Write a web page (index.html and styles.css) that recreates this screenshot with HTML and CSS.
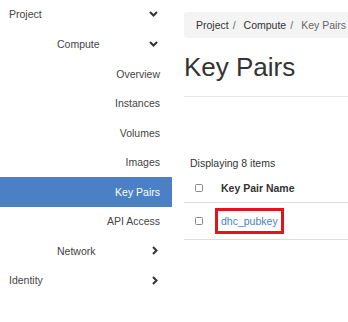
FILE: index.html
```html
<!DOCTYPE html>
<html lang="en">
<head>
    <meta charset="UTF-8">
    <meta name="viewport" content="width=device-width, initial-scale=1.0">
    <title>Key Pairs</title>
    <link rel="stylesheet" href="styles.css">
</head>
<body>
    <!-- Sidebar -->
    <nav class="sidebar">
        <div class="nav-row top first">
            <span>Project</span>
            <svg class="chev" width="9" height="6" viewBox="0 0 9 6"><path d="M1 1 L4.5 4.5 L8 1" /></svg>
        </div>
        <div class="nav-row group compute">
            <span>Compute</span>
            <svg class="chev" width="9" height="6" viewBox="0 0 9 6"><path d="M1 1 L4.5 4.5 L8 1" /></svg>
        </div>
        <a class="nav-row sub" href="#">Overview</a>
        <a class="nav-row sub" href="#">Instances</a>
        <a class="nav-row sub" href="#">Volumes</a>
        <a class="nav-row sub" href="#">Images</a>
        <a class="nav-row sub active" href="#">Key Pairs</a>
        <a class="nav-row sub" href="#">API Access</a>
        <div class="nav-row group">
            <span>Network</span>
            <svg class="chev" width="6" height="9" viewBox="0 0 6 9"><path d="M1 1 L4.5 4.5 L1 8" /></svg>
        </div>
        <div class="nav-row top">
            <span>Identity</span>
            <svg class="chev" width="6" height="9" viewBox="0 0 6 9"><path d="M1 1 L4.5 4.5 L1 8" /></svg>
        </div>
    </nav>

    <!-- Content -->
    <main class="content">
        <div class="inner">
            <ol class="breadcrumb">
                <li>Project</li>
                <li class="sep">/</li>
                <li>Compute</li>
                <li class="sep">/</li>
                <li class="current">Key Pairs</li>
            </ol>

            <h1 class="page-title">Key Pairs</h1>

            <p class="count">Displaying 8 items</p>

            <table class="keys">
                <colgroup>
                    <col class="col-check">
                    <col>
                </colgroup>
                <thead>
                    <tr>
                        <th class="check"><span class="box"></span></th>
                        <th>Key Pair Name</th>
                    </tr>
                </thead>
                <tbody>
                    <tr>
                        <td class="check"><span class="box"></span></td>
                        <td><a class="key-link" href="#">dhc_pubkey</a></td>
                    </tr>
                </tbody>
            </table>
        </div>
    </main>
</body>
</html>
```

FILE: styles.css
```css
/* Base */
body {
    margin: 0;
    display: flex;
    font-family: "Liberation Sans", Arial, sans-serif;
    font-size: 10.5px;
    color: #333;
    background: #fff;
    height: 322px;
    overflow: hidden;
}

/* Sidebar */
.sidebar {
    width: 172px;
    flex-shrink: 0;
}

.nav-row {
    display: flex;
    align-items: center;
    height: 29.5px;
    color: #444;
    text-decoration: none;
    box-sizing: border-box;
}

.nav-row.first {
    height: 28px;
}

.nav-row.compute {
    height: 31px;
}

.nav-row.top {
    justify-content: space-between;
    padding-left: 9px;
    padding-right: 14px;
}

.nav-row.group {
    justify-content: space-between;
    padding-left: 57px;
    padding-right: 14px;
}

.nav-row.sub {
    justify-content: flex-end;
    padding-right: 12px;
}

.nav-row.active {
    background-color: #4b80c5;
    color: #fff;
}

.chev path {
    fill: none;
    stroke: #333;
    stroke-width: 2;
}

/* Content */
.content {
    flex: 1;
    overflow: hidden;
}

.inner {
    width: 320px;
    padding-left: 12px;
    padding-top: 12px;
}

.breadcrumb {
    display: flex;
    list-style: none;
    margin: 0;
    padding: 0 12px;
    height: 26px;
    align-items: center;
    background-color: #f4f4f4;
    border-radius: 4px;
    white-space: nowrap;
    color: #333;
}

.breadcrumb .sep {
    color: #666;
    padding: 0 8px 0 4px;
}

.breadcrumb .current {
    color: #666;
}

.page-title {
    margin: 0;
    padding: 15px 0 14px;
    font-size: 26px;
    font-weight: normal;
    line-height: 29px;
    color: #333;
    border-bottom: 1px solid #e8e8e8;
}

.count {
    margin: 59px 0 0 6px;
    line-height: 14px;
}

/* Table */
.keys {
    width: 100%;
    table-layout: fixed;
    border-collapse: collapse;
    margin-top: 4px;
}

.col-check {
    width: 37px;
}

.keys th,
.keys td {
    text-align: left;
    padding: 0;
}

.keys th {
    height: 28px;
    font-weight: bold;
    border-bottom: 1px solid #ddd;
}

.keys td {
    height: 36px;
    border-bottom: 1px solid #ddd;
}

.keys .check {
    padding-left: 11px;
}

.box {
    display: block;
    width: 6px;
    height: 6px;
    border: 1px solid #888;
    border-radius: 1.5px;
}

.key-link {
    display: inline-block;
    margin-left: -6px;
    padding: 2px 3px;
    line-height: 16px;
    border: 3px solid #e3121b;
    color: #4e7ec6;
    text-decoration: none;
}
```
